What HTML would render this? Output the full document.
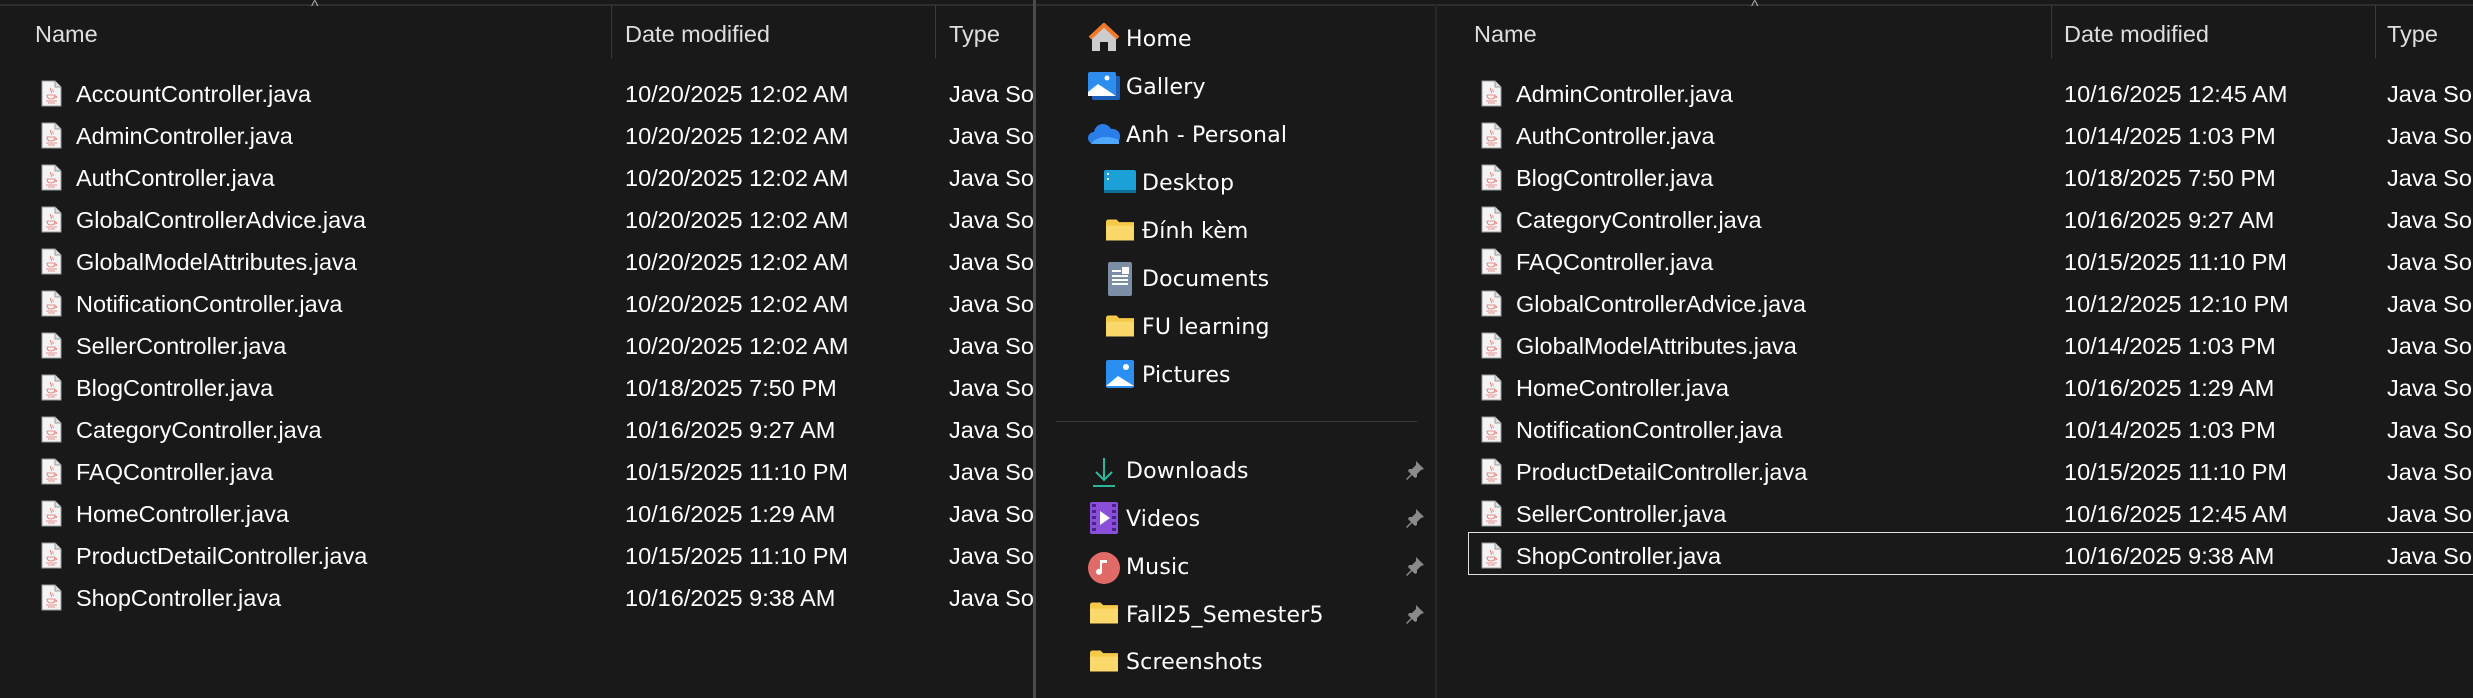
<!DOCTYPE html>
<html><head><meta charset="utf-8"><style>
*{margin:0;padding:0;box-sizing:border-box}
body{width:2473px;height:698px;background:#191919;overflow:hidden;position:relative;font-family:"Liberation Sans","DejaVu Sans",sans-serif;color:#fff}
.a{position:absolute;white-space:nowrap}
.t{font-size:23.5px;line-height:28px}
.h{font-size:23.5px;color:#dedede;line-height:28px}
.n{font-size:22px;line-height:28px;font-family:"DejaVu Sans","Liberation Sans",sans-serif;letter-spacing:0.2px}
.vs{position:absolute;width:1px;background:#3a3a3a;top:6px;height:52px}
.ic{position:absolute;width:21px;height:27px}
</style></head><body>
<div class="a" style="left:0;top:4px;width:1033px;height:2px;background:#2e2e2e"></div>
<div class="a" style="left:1036px;top:4px;width:1437px;height:2px;background:#2e2e2e"></div>
<div class="a" style="left:1033px;top:0;width:3px;height:698px;background:#4a4a4a;z-index:2"></div>
<div class="a" style="left:1435px;top:4px;width:2px;height:694px;background:#262626"></div>

<svg width="0" height="0" style="position:absolute"><defs>
<symbol id="jf" viewBox="0 0 21 27"><path d="M1 1H14L20 7V26H1Z" fill="#f4f4f4" stroke="#9a9a9a" stroke-width="1"/><path d="M14 1V7H20" fill="#ddd" stroke="#9a9a9a" stroke-width="1"/><path d="M10 8c-2 2 2 3 0 5M12 9c-1 1 1 2 0 3M6 15h8c0 3-2 4-4 4s-4-1-4-4zM14 16c2 0 2 2 0 2M5 21h11M7 23h7" fill="none" stroke="#e07070" stroke-width="0.8"/></symbol>
<symbol id="fd" viewBox="0 0 32 24"><path d="M0 3q0-3 3-3h9l3 3h17v21H0Z" fill="#f7c948"/><path d="M0 7h32v17H0Z" fill="#fbd86a"/></symbol>
<symbol id="pin" viewBox="0 0 20 20"><path d="M11 1l8 8-3 1-4 4 0 3-2 1-3-3-5 5-1-1 5-5-3-3 1-2 3 0 4-4z" fill="#8a8a8a"/></symbol>
</defs></svg>

<div class="a" style="left:311px;top:-2px;font-size:16px;color:#aaa">^</div>
<div class="a h" style="left:35px;top:20px">Name</div>
<div class="vs" style="left:611px"></div>
<div class="a h" style="left:625px;top:20px">Date modified</div>
<div class="vs" style="left:935px"></div>
<div class="a h" style="left:949px;top:20px">Type</div>

<div id="L"></div>

<svg class="a" style="left:1088px;top:22px" width="32" height="32" viewBox="0 0 32 32"><path d="M4 16L16 5l12 11v13H20v-9h-8v9H4Z" fill="#ccc"/><path d="M2 16L16 3l14 13" fill="none" stroke="#f07a28" stroke-width="4" stroke-linejoin="round"/></svg>
<div class="a n" style="left:1126px;top:26px">Home</div>
<svg class="a" style="left:1088px;top:70px" width="32" height="32" viewBox="0 0 32 32"><rect x="4" y="6" width="28" height="24" rx="2" fill="#1c5fb8"/><rect x="0" y="2" width="28" height="24" rx="2" fill="#2d8ef0"/><path d="M0 22l10-8 18 12H0z" fill="#fff"/><circle cx="19" cy="8" r="2.5" fill="#fff"/></svg>
<div class="a n" style="left:1126px;top:74px">Gallery</div>
<svg class="a" style="left:1088px;top:122px" width="32" height="24" viewBox="0 0 32 24"><path d="M6 22a6 6 0 010-12 9 9 0 0117-3 7 7 0 013 15z" fill="#2b7de9"/><path d="M3 22c4-6 14-10 28-4v4z" fill="#4fa8ff"/></svg>
<div class="a n" style="left:1126px;top:122px">Anh - Personal</div>
<svg class="a" style="left:1104px;top:170px" width="32" height="26" viewBox="0 0 32 26"><rect width="32" height="22" rx="2" fill="#1ba1d8"/><rect y="20" width="32" height="3" fill="#0d6f9a"/><rect x="3" y="3" width="2" height="2" fill="#fff"/><rect x="3" y="8" width="2" height="2" fill="#fff"/></svg>
<div class="a n" style="left:1142px;top:170px">Desktop</div>
<svg class="a" style="left:1106px;top:219px" width="28" height="22" viewBox="0 0 32 24"><use href="#fd"/></svg>
<div class="a n" style="left:1142px;top:218px">Đính kèm</div>
<svg class="a" style="left:1108px;top:262px" width="24" height="34" viewBox="0 0 24 34"><rect width="24" height="34" rx="2" fill="#7c8ea6"/><path d="M4 9h9M4 14h16M4 18h16M4 22h16M15 6h5v5h-5z" stroke="#fff" stroke-width="2" fill="#fff"/></svg>
<div class="a n" style="left:1142px;top:266px">Documents</div>
<svg class="a" style="left:1106px;top:315px" width="28" height="22" viewBox="0 0 32 24"><use href="#fd"/></svg>
<div class="a n" style="left:1142px;top:314px">FU learning</div>
<svg class="a" style="left:1106px;top:360px" width="28" height="28" viewBox="0 0 28 28"><rect width="28" height="28" rx="2" fill="#2a8ff0"/><path d="M0 26l12-10 16 10z" fill="#fff"/><circle cx="20" cy="7" r="3" fill="#fff"/></svg>
<div class="a n" style="left:1142px;top:362px">Pictures</div>
<div class="a" style="left:1056px;top:421px;width:361px;height:1px;background:#3a3a3a"></div>
<svg class="a" style="left:1092px;top:457px" width="24" height="30" viewBox="0 0 24 30"><path d="M12 1v22M4 15l8 8 8-8M1 29h22" fill="none" stroke="#2bb89a" stroke-width="2"/></svg>
<div class="a n" style="left:1126px;top:458px">Downloads</div>
<svg class="a" style="left:1090px;top:502px" width="28" height="32" viewBox="0 0 28 32"><rect width="28" height="32" rx="2" fill="#8a4fd8"/><path d="M4 2v28M24 2v28" stroke="#4a2290" stroke-width="4" stroke-dasharray="3 3"/><path d="M10 9l10 7-10 7z" fill="#fff"/></svg>
<div class="a n" style="left:1126px;top:506px">Videos</div>
<svg class="a" style="left:1088px;top:552px" width="32" height="32" viewBox="0 0 32 32"><circle cx="16" cy="16" r="16" fill="#e06a68"/><path d="M14 8v12a3 3 0 11-2-3V8h7v3h-5" fill="#fff"/></svg>
<div class="a n" style="left:1126px;top:554px">Music</div>
<svg class="a" style="left:1090px;top:602px" width="28" height="22" viewBox="0 0 32 24"><use href="#fd"/></svg>
<div class="a n" style="left:1126px;top:602px">Fall25_Semester5</div>
<svg class="a" style="left:1090px;top:650px" width="28" height="22" viewBox="0 0 32 24"><use href="#fd"/></svg>
<div class="a n" style="left:1126px;top:649px">Screenshots</div>
<svg class="a" style="left:1405px;top:460px" width="20" height="20"><use href="#pin"/></svg>
<svg class="a" style="left:1405px;top:508px" width="20" height="20"><use href="#pin"/></svg>
<svg class="a" style="left:1405px;top:556px" width="20" height="20"><use href="#pin"/></svg>
<svg class="a" style="left:1405px;top:604px" width="20" height="20"><use href="#pin"/></svg>

<div class="a" style="left:1751px;top:-2px;font-size:16px;color:#aaa">^</div>
<div class="a h" style="left:1474px;top:20px">Name</div>
<div class="vs" style="left:2051px"></div>
<div class="a h" style="left:2064px;top:20px">Date modified</div>
<div class="vs" style="left:2375px"></div>
<div class="a h" style="left:2387px;top:20px">Type</div>
<div class="a" style="left:1468px;top:532px;width:1005px;height:43px;border:1px solid #e0e0e0;border-right:none"></div>
<div id="R"></div>

<script>
function rows(id,items,ix,tx,dx,ty){var h='';items.forEach(function(it,i){var y=94+42*i;
h+='<svg class="ic" style="left:'+ix+'px;top:'+(y-14)+'px" viewBox="0 0 21 27"><use href="#jf"/></svg>'+
'<div class="a t" style="left:'+tx+'px;top:'+(y-14)+'px">'+it[0]+'</div>'+
'<div class="a t" style="left:'+dx+'px;top:'+(y-14)+'px">'+it[1]+'</div>'+
'<div class="a t" style="left:'+ty+'px;top:'+(y-14)+'px;width:'+(id=='L'?84:86)+'px;overflow:hidden">Java Source</div>';});
document.getElementById(id).innerHTML=h;}
rows('L',[["AccountController.java","10/20/2025 12:02 AM"],["AdminController.java","10/20/2025 12:02 AM"],["AuthController.java","10/20/2025 12:02 AM"],["GlobalControllerAdvice.java","10/20/2025 12:02 AM"],["GlobalModelAttributes.java","10/20/2025 12:02 AM"],["NotificationController.java","10/20/2025 12:02 AM"],["SellerController.java","10/20/2025 12:02 AM"],["BlogController.java","10/18/2025 7:50 PM"],["CategoryController.java","10/16/2025 9:27 AM"],["FAQController.java","10/15/2025 11:10 PM"],["HomeController.java","10/16/2025 1:29 AM"],["ProductDetailController.java","10/15/2025 11:10 PM"],["ShopController.java","10/16/2025 9:38 AM"]],41,76,625,949);
rows('R',[["AdminController.java","10/16/2025 12:45 AM"],["AuthController.java","10/14/2025 1:03 PM"],["BlogController.java","10/18/2025 7:50 PM"],["CategoryController.java","10/16/2025 9:27 AM"],["FAQController.java","10/15/2025 11:10 PM"],["GlobalControllerAdvice.java","10/12/2025 12:10 PM"],["GlobalModelAttributes.java","10/14/2025 1:03 PM"],["HomeController.java","10/16/2025 1:29 AM"],["NotificationController.java","10/14/2025 1:03 PM"],["ProductDetailController.java","10/15/2025 11:10 PM"],["SellerController.java","10/16/2025 12:45 AM"],["ShopController.java","10/16/2025 9:38 AM"]],1481,1516,2064,2387);
</script>
</body></html>
